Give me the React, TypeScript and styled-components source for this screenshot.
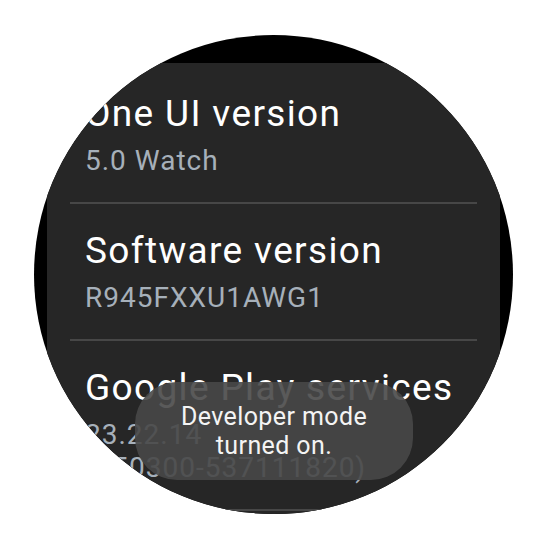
import styled, { createGlobalStyle } from "styled-components";

const GlobalStyle = createGlobalStyle`
  html, body {
    margin: 0;
    padding: 0;
    background: #ffffff;
  }
  body {
    font-family: Roboto, "Liberation Sans", sans-serif;
  }
`;

const Page = styled.div`
  width: 550px;
  height: 550px;
  padding: 35px 0 0 34px;
  box-sizing: border-box;
`;

const Watch = styled.div`
  position: relative;
  width: 479px;
  height: 479px;
  border-radius: 50%;
  background: #000000;
  overflow: hidden;
  padding: 28px 13px 0;
  box-sizing: border-box;
`;

const Panel = styled.div`
  height: 100%;
  background: #262626;
  display: flex;
  flex-direction: column;
  padding-top: 29px;
`;

const Item = styled.div`
  display: flex;
  flex-direction: column;
  padding: 0 15px 25px 38px;
`;

const Divider = styled.div`
  height: 2px;
  margin: 0 23px 25px;
  background: #474747;
  flex-shrink: 0;
`;

const Title = styled.div`
  color: #ffffff;
  font-size: 37px;
  line-height: 44px;
  letter-spacing: 1.35px;
  margin-bottom: 8px;
  white-space: nowrap;
`;

const Value = styled.div`
  color: #a6b0ba;
  font-size: 28px;
  line-height: 33px;
  letter-spacing: 1px;
`;

const Toast = styled.div`
  position: absolute;
  left: 101px;
  top: 347px;
  width: 278px;
  padding: 20px 0;
  box-sizing: border-box;
  border-radius: 42px;
  background: rgba(72, 72, 72, 0.9);
  color: #f4f4f4;
  font-size: 25px;
  line-height: 29px;
  letter-spacing: 0.4px;
  text-align: center;
`;

const items = [
  { title: "One UI version", value: ["5.0 Watch"] },
  { title: "Software version", value: ["R945FXXU1AWG1"] },
  { title: "Google Play services", value: ["23.22.14", "(150300-537111820)"] },
];

export default function App() {
  return (
    <>
      <GlobalStyle />
      <Page>
        <Watch>
          <Panel>
            {items.map((item) => (
              <div key={item.title}>
                <Item>
                  <Title>{item.title}</Title>
                  {item.value.map((line) => (
                    <Value key={line}>{line}</Value>
                  ))}
                </Item>
                <Divider />
              </div>
            ))}
          </Panel>
          <Toast>
            Developer mode
            <br />
            turned on.
          </Toast>
        </Watch>
      </Page>
    </>
  );
}
